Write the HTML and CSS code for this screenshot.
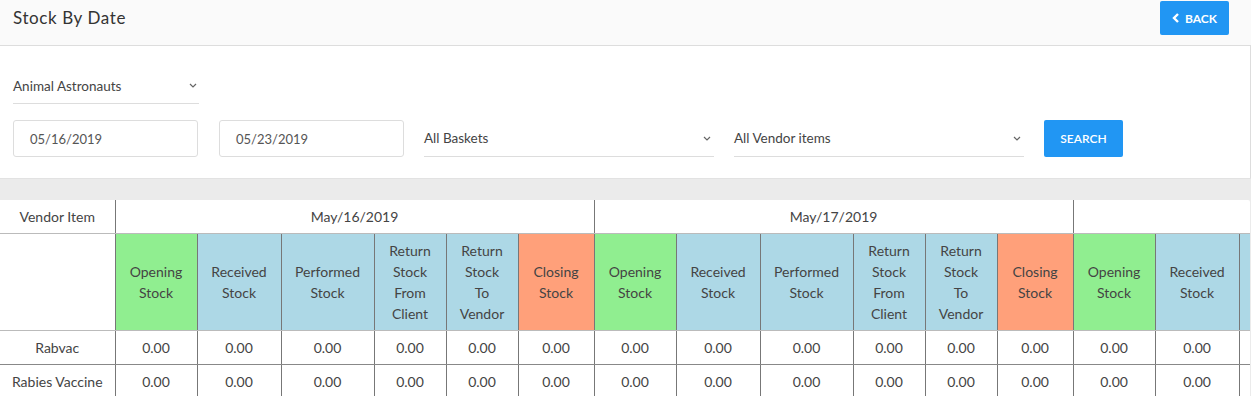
FILE: index.html
```html
<!DOCTYPE html>
<html lang="en">
<head>
  <meta charset="UTF-8">
  <title>Stock By Date</title>
  <link rel="stylesheet" href="styles.css">
</head>
<body>
  <!-- header -->
  <div class="page-header">
    <h1 class="page-title">Stock By Date</h1>
    <button class="btn btn-back">
      <svg width="8" height="10" viewBox="0 0 8 10"><path d="M6 1 L2 5 L6 9" fill="none" stroke="#fff" stroke-width="2.4"/></svg>
      BACK
    </button>
  </div>

  <!-- filters -->
  <div class="filters">
    <div class="filter-row">
      <div class="select select-clinic">
        <span>Animal Astronauts</span>
        <svg class="caret" width="8" height="5" viewBox="0 0 8 5"><path d="M1 1 L4 4 L7 1" fill="none" stroke="#666" stroke-width="1.2"/></svg>
      </div>
    </div>
    <div class="filter-row filter-row-main">
      <div class="date-input">05/16/2019</div>
      <div class="date-input">05/23/2019</div>
      <div class="select select-wide">
        <span>All Baskets</span>
        <svg class="caret" width="8" height="5" viewBox="0 0 8 5"><path d="M1 1 L4 4 L7 1" fill="none" stroke="#666" stroke-width="1.2"/></svg>
      </div>
      <div class="select select-wide">
        <span>All Vendor items</span>
        <svg class="caret" width="8" height="5" viewBox="0 0 8 5"><path d="M1 1 L4 4 L7 1" fill="none" stroke="#666" stroke-width="1.2"/></svg>
      </div>
      <button class="btn btn-search">SEARCH</button>
    </div>
  </div>

  <div class="spacer"></div>

  <!-- table -->
  <div class="table-wrap">
    <table class="stock-table" id="stock-table">
      <colgroup id="cols"></colgroup>
      <thead>
        <tr class="date-row" id="date-row">
          <th class="item-col">Vendor Item</th>
        </tr>
        <tr class="type-row" id="type-row">
          <th class="item-col"></th>
        </tr>
      </thead>
      <tbody id="rows"></tbody>
    </table>
  </div>

  <script>
    // 表格数据
    const dates = ['May/16/2019', 'May/17/2019', 'May/18/2019'];
    const types = [
      { label: 'Opening Stock', cls: 'open', w: 82 },
      { label: 'Received Stock', cls: 'mid', w: 84 },
      { label: 'Performed Stock', cls: 'mid', w: 93 },
      { label: 'Return Stock From Client', cls: 'mid', w: 72 },
      { label: 'Return Stock To Vendor', cls: 'mid', w: 72 },
      { label: 'Closing Stock', cls: 'close', w: 76 }
    ];
    const items = ['Rabvac', 'Rabies Vaccine'];

    const cols = document.getElementById('cols');
    const dateRow = document.getElementById('date-row');
    const typeRow = document.getElementById('type-row');
    const rows = document.getElementById('rows');

    let col = document.createElement('col');
    col.style.width = '115px';
    cols.appendChild(col);

    dates.forEach(d => {
      const th = document.createElement('th');
      th.colSpan = types.length;
      th.textContent = d;
      dateRow.appendChild(th);

      types.forEach(t => {
        const c = document.createElement('col');
        c.style.width = t.w + 'px';
        cols.appendChild(c);

        const h = document.createElement('th');
        h.className = t.cls;
        h.textContent = t.label;
        typeRow.appendChild(h);
      });
    });

    items.forEach(name => {
      const tr = document.createElement('tr');
      const td = document.createElement('td');
      td.className = 'item-col';
      td.textContent = name;
      tr.appendChild(td);
      for (let i = 0; i < dates.length * types.length; i++) {
        const cell = document.createElement('td');
        cell.textContent = '0.00';
        tr.appendChild(cell);
      }
      rows.appendChild(tr);
    });
  </script>
</body>
</html>
```
FILE: styles.css
```css
/* 全局样式 */
body {
  margin: 0;
  background: #ebebeb;
  font-family: 'Lato', 'Noto Sans', sans-serif;
  color: #333;
}

.page-header {
  height: 46px;
  box-sizing: border-box;
  background: #fafafa;
  border-bottom: 1px solid #ddd;
  padding: 1px 22px 0 13px;
  display: flex;
  justify-content: space-between;
  align-items: flex-start;
}

.page-title {
  margin: 0;
  height: 34px;
  line-height: 34px;
  font-size: 17px;
  font-weight: normal;
  letter-spacing: 0.6px;
  color: #333;
}

.btn {
  border: none;
  border-radius: 2px;
  background: #2196f3;
  color: #fff;
  font-family: inherit;
  font-size: 12px;
  font-weight: bold;
  cursor: pointer;
  display: flex;
  align-items: center;
  justify-content: center;
  gap: 5px;
  padding: 0;
}

.btn-back {
  width: 69px;
  height: 34px;
}

.btn-search {
  width: 79px;
  height: 37px;
  font-weight: 600;
}

/* 过滤区 */
.filters {
  background: #fff;
  border-right: 1px solid #ddd;
  padding: 23px 13px 21px;
}

.filter-row {
  display: flex;
  align-items: flex-end;
}

.filter-row-main {
  margin-top: 16px;
  gap: 20px;
}

.select {
  height: 34px;
  box-sizing: border-box;
  border-bottom: 1px solid #ddd;
  display: flex;
  align-items: center;
  justify-content: space-between;
  padding-right: 2px;
  font-size: 13.5px;
  color: #444;
}

.select-clinic {
  width: 186px;
  height: 35px;
  padding-bottom: 1px;
}

.filter-row-main .select {
  height: 37px;
}

.select-wide {
  width: 290px;
  padding-right: 3px;
}

.caret {
  display: block;
}

.date-input {
  width: 185px;
  height: 37px;
  box-sizing: border-box;
  border: 1px solid #ddd;
  border-radius: 3px;
  padding-left: 16px;
  display: flex;
  align-items: center;
  font-size: 13px;
  color: #555;
}

.filter-row-main .date-input + .date-input {
  margin-left: 1px;
}

.spacer {
  height: 21px;
  border-top: 1px solid #e2e2e2;
}

/* 表格 */
.table-wrap {
  width: 1250px;
  overflow: hidden;
  background: #fff;
  border-top-right-radius: 2px;
}

.stock-table {
  border-collapse: collapse;
  table-layout: fixed;
  width: 1552px;
  font-size: 14px;
  color: #444;
}

.stock-table th,
.stock-table td {
  font-weight: normal;
  text-align: center;
  border-left: 1px solid #777;
  padding: 0 11px;
  line-height: 21px;
  overflow: hidden;
  white-space: normal;
}

.stock-table .item-col {
  border-left: none;
  padding: 0 4px;
}

.date-row th {
  height: 33px;
  white-space: nowrap;
  border-bottom: 1px solid #bbb;
}

.type-row th {
  height: 96px;
  border-bottom: 1px solid #bbb;
}

.type-row .open {
  background: #90ee90;
}

.type-row .mid {
  background: #add8e6;
}

.type-row .close {
  background: #ffa07a;
}

.stock-table tbody td {
  height: 33px;
  border-bottom: 1px solid #888;
}
```
